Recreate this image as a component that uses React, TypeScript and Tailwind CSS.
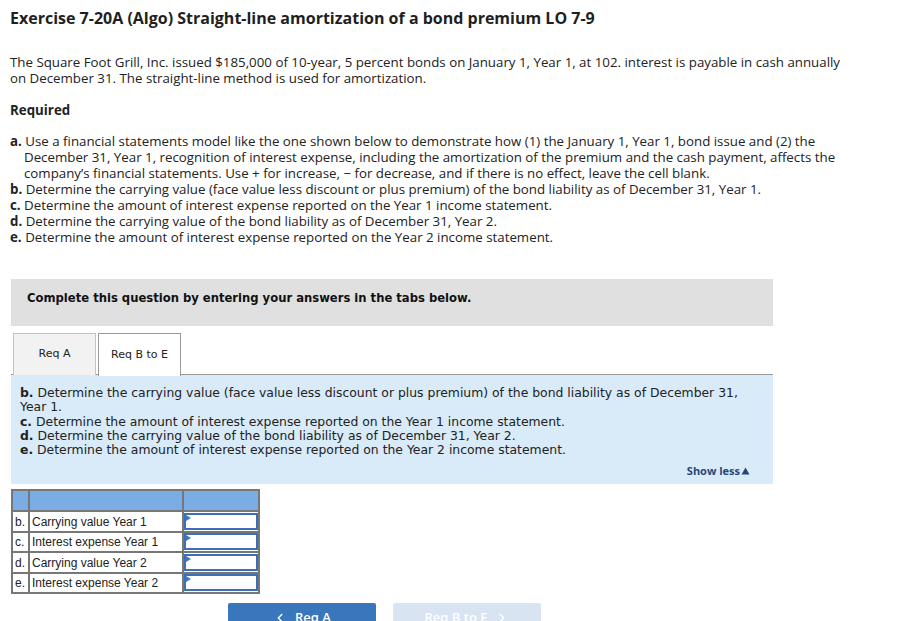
import { ChevronLeft, ChevronRight } from "lucide-react";

const rows = [
  { key: "b.", label: "Carrying value Year 1" },
  { key: "c.", label: "Interest expense Year 1" },
  { key: "d.", label: "Carrying value Year 2" },
  { key: "e.", label: "Interest expense Year 2" },
];

const required = [
  {
    k: "a.",
    t: "Use a financial statements model like the one shown below to demonstrate how (1) the January 1, Year 1, bond issue and (2) the December 31, Year 1, recognition of interest expense, including the amortization of the premium and the cash payment, affects the company’s financial statements. Use + for increase, − for decrease, and if there is no effect, leave the cell blank.",
  },
  { k: "b.", t: "Determine the carrying value (face value less discount or plus premium) of the bond liability as of December 31, Year 1." },
  { k: "c.", t: "Determine the amount of interest expense reported on the Year 1 income statement." },
  { k: "d.", t: "Determine the carrying value of the bond liability as of December 31, Year 2." },
  { k: "e.", t: "Determine the amount of interest expense reported on the Year 2 income statement." },
];

export default function App() {
  return (
    <main className="w-[907px] h-[621px] overflow-hidden bg-white text-[#222] font-['Open_Sans',sans-serif]">
      <div className="px-[10px] pt-[8px]">
        <h1 className="text-[16px] leading-[20px] font-bold text-[#1f1f1f]">
          Exercise 7-20A (Algo) Straight-line amortization of a bond premium LO 7-9
        </h1>

        <p className="mt-[26px] w-[838px] text-[13.3px] leading-[16px]">
          The Square Foot Grill, Inc. issued $185,000 of 10-year, 5 percent bonds on January 1, Year 1, at 102. interest is payable in cash annually on December 31. The straight-line method is used for amortization.
        </p>

        <h2 className="mt-[16px] text-[13.3px] leading-[16px] font-bold">Required</h2>

        <ul className="mt-[15px] w-[840px] text-[13.3px] leading-[16px]">
          {required.map((r) => (
            <li key={r.k} className="pl-[14px] -indent-[14px]">
              <span className="font-bold">{r.k}</span> {r.t}
            </li>
          ))}
        </ul>
      </div>

      <div className="ml-[11px] w-[762px] mt-[34px] font-['DejaVu_Sans',Verdana,sans-serif]">
        <div className="h-[47px] bg-[#e0e0e0] pl-[16px] pt-[12px] text-[11.6px] leading-[14px] font-bold text-[#111]">
          Complete this question by entering your answers in the tabs below.
        </div>

        <div className="mt-[7px] flex gap-[2px] pl-[2px] border-b border-[#9a9a9a] h-[42px]">
          <div className="w-[83px] h-[42px] bg-[#f2f2f2] border border-[#c4c4c4] border-b-0 flex items-center justify-center text-[11px] text-[#222]">
            Req A
          </div>
          <div className="w-[83px] h-[43px] bg-white border border-[#9a9a9a] border-b-0 flex items-center justify-center text-[11px] text-[#222]">
            Req B to E
          </div>
        </div>

        <div className="h-[109px] bg-[#d9eaf8] pt-[11px] pl-[9px] pr-[23px] text-[12.4px] leading-[14.25px] text-[#222]">
          <p className="w-[730px]">
            <b>b.</b> Determine the carrying value (face value less discount or plus premium) of the bond liability as of December 31, Year 1.
          </p>
          <p><b>c.</b> Determine the amount of interest expense reported on the Year 1 income statement.</p>
          <p><b>d.</b> Determine the carrying value of the bond liability as of December 31, Year 2.</p>
          <p><b>e.</b> Determine the amount of interest expense reported on the Year 2 income statement.</p>
          <div className="mt-[7px] flex justify-end items-center font-['Open_Sans',sans-serif] text-[11px] font-bold text-[#24487a]">
            Show less
            <svg width="9" height="8" viewBox="0 0 9 8" className="ml-[1px]">
              <path d="M4.5 0.5 L8.5 7.5 L0.5 7.5 Z" fill="#24487a" />
            </svg>
          </div>
        </div>

        <table className="mt-[5px] border-collapse font-['Liberation_Sans',Arial,sans-serif] text-[12px] text-[#222]">
          <thead>
            <tr className="h-[21px] bg-[#79ade3]">
              <th className="w-[17px] border-2 border-[#777]" />
              <th className="w-[154px] border-2 border-[#777]" />
              <th className="w-[76px] border-2 border-[#777]" />
            </tr>
          </thead>
          <tbody>
            {rows.map((r) => (
              <tr key={r.key} className="h-[20.5px]">
                <td className="border-2 border-[#777] px-[2px] pt-[1px] leading-[16px]">{r.key}</td>
                <td className="border-2 border-[#777] px-[2px] pt-[1px] leading-[16px]">{r.label}</td>
                <td className="border-2 border-[#777] p-0">
                  <div className="relative h-[17px] border-2 border-[#3d6fb4] bg-white">
                    <svg width="5" height="6" viewBox="0 0 5 6" className="absolute left-[0px] top-[0px]">
                      <path d="M0 0 L5 3 L0 6 Z" fill="#3d78c4" />
                    </svg>
                  </div>
                </td>
              </tr>
            ))}
          </tbody>
        </table>

        <div className="mt-[9px] ml-[217px] flex gap-[17px] font-['Open_Sans',sans-serif] text-[13px] font-semibold">
          <button className="w-[148px] h-[30px] rounded-t-[2px] bg-[#3a76bb] text-white flex items-center justify-center gap-[8px]">
            <ChevronLeft size={14} strokeWidth={2.5} /> Req A
          </button>
          <button className="w-[148px] h-[30px] rounded-t-[2px] bg-[#d9e4f2] text-white flex items-center justify-center gap-[8px]">
            Req B to E <ChevronRight size={14} strokeWidth={2.5} />
          </button>
        </div>
      </div>
    </main>
  );
}
